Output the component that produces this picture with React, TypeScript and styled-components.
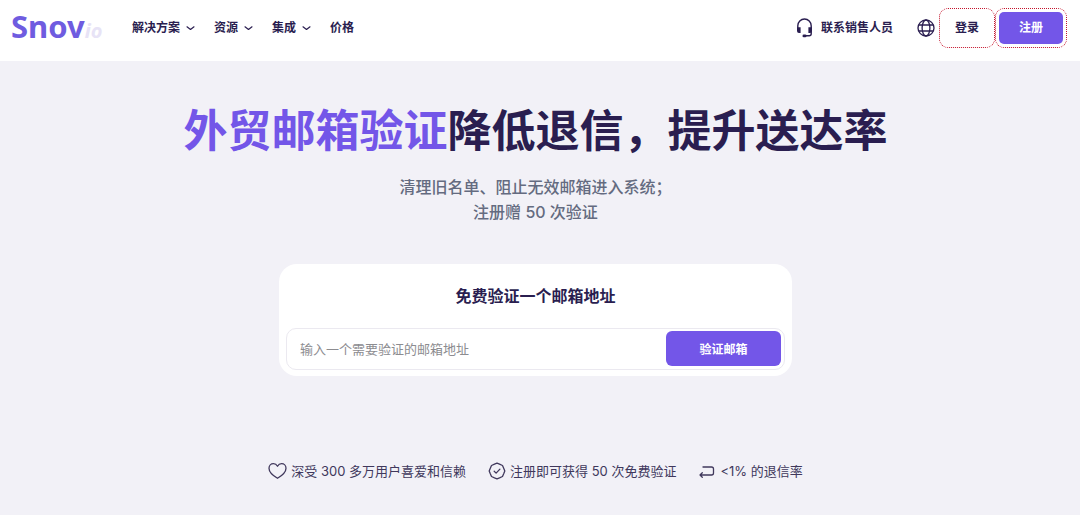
import React from 'react';
import styled, { createGlobalStyle } from 'styled-components';

const ink = '#2a1e50';
const violet = '#7356e8';

const GlobalStyle = createGlobalStyle`
  * { box-sizing: border-box; }
  body {
    margin: 0;
    background: #fff;
    color: ${ink};
    font-family: Inter, 'Noto Sans CJK SC', sans-serif;
  }
  button, input { font: inherit; }
  h1, h2, p, ul { margin: 0; padding: 0; }
`;

const Header = styled.header`
  display: flex;
  align-items: center;
  height: 61px;
  padding: 0 13px 5px 11px;
`;

const Logo = styled.a`
  display: flex;
  align-items: baseline;
  width: 121px;
  color: #6f5ce0;
  font: 700 31px/40px 'Noto Sans', sans-serif;
  text-decoration: none;
`;

const LogoSuffix = styled.span`
  color: #e7e3f6;
  font-size: 20px;
  font-style: italic;
`;

const Nav = styled.nav`
  display: flex;
  flex: 1;
  gap: 18px;
`;

const NavButton = styled.button`
  display: flex;
  align-items: center;
  gap: 5px;
  padding: 0;
  border: 0;
  background: none;
  color: ${ink};
  font-size: 12px;
  font-weight: 700;
  line-height: 20px;
  white-space: nowrap;
`;

const NavLink = styled.a`
  display: flex;
  align-items: center;
  gap: 8px;
  color: ${ink};
  font-size: 12px;
  font-weight: 700;
  line-height: 20px;
  text-decoration: none;
  white-space: nowrap;
`;

const Actions = styled.div`
  display: flex;
  align-items: center;
`;

const LanguageButton = styled.button`
  display: flex;
  margin: 0 4px 0 24px;
  padding: 0;
  border: 0;
  background: none;
  color: ${ink};
`;

const AccountFrame = styled.div`
  display: flex;
  padding: 3px;
  border: 1px dotted #c4142c;
  border-radius: 9px;
`;

const AccountLink = styled.a<{ $filled?: boolean }>`
  display: flex;
  align-items: center;
  justify-content: center;
  width: ${(p) => (p.$filled ? 64 : 48)}px;
  height: 32px;
  border-radius: 5px;
  background: ${(p) => (p.$filled ? violet : 'transparent')};
  color: ${(p) => (p.$filled ? '#fff' : ink)};
  font-size: 12px;
  font-weight: 700;
  line-height: 20px;
  text-decoration: none;
`;

const Hero = styled.main`
  display: flex;
  flex-direction: column;
  align-items: center;
  padding: 38px 9px 33px 0;
  background: #f2f1f7;
`;

const Title = styled.h1`
  font-size: 44px;
  font-weight: 700;
  line-height: 64px;
  text-align: center;
`;

const Accent = styled.span`
  color: ${violet};
`;

const Lead = styled.p`
  margin-top: 12px;
  color: #646b80;
  font-size: 16px;
  font-weight: 500;
  line-height: 25px;
  text-align: center;
`;

const Card = styled.form`
  width: 100%;
  max-width: 513px;
  margin-top: 39px;
  padding: 20px 7px 6px;
  border-radius: 18px;
  background: #fff;
`;

const CardTitle = styled.h2`
  font-size: 16px;
  font-weight: 700;
  line-height: 24px;
  text-align: center;
`;

const Field = styled.div`
  display: flex;
  align-items: center;
  height: 42px;
  margin-top: 20px;
  padding: 0 3px 1px 13px;
  border: 1px solid #ebe9f0;
  border-radius: 10px;
`;

const EmailInput = styled.input`
  flex: 1;
  min-width: 0;
  padding: 0;
  border: 0;
  outline: 0;
  background: none;
  color: ${ink};
  font-size: 13px;
  line-height: 20px;
  &::placeholder { color: #8c8c90; opacity: 1; }
`;

const SubmitButton = styled.button`
  width: 115px;
  height: 35px;
  border: 0;
  border-radius: 6px;
  background: ${violet};
  color: #fff;
  font-size: 12px;
  font-weight: 700;
`;

const Perks = styled.ul`
  display: flex;
  flex-wrap: wrap;
  justify-content: center;
  gap: 22px;
  margin-top: 84px;
  list-style: none;
`;

const Perk = styled.li`
  display: flex;
  align-items: center;
  gap: 4px;
  color: #40385c;
  font-size: 13px;
  line-height: 22px;
`;

const Chevron = () => (
  <svg width="11" height="8" viewBox="0 0 11 8" fill="none" stroke="currentColor" strokeWidth="1.2" strokeLinecap="round" strokeLinejoin="round" aria-hidden="true">
    <path d="M2 2.8 5.5 5.5 9 2.8" />
  </svg>
);

const Headset = () => (
  <svg width="17" height="20" viewBox="0 0 17 20" fill="none" stroke="currentColor" strokeWidth="1.4" aria-hidden="true">
    <path d="M1.8 10.5V7.7a6.7 6.7 0 0 1 13.4 0v8.1q0 2-2 2H9" />
    <path d="M1 9.3h3.6v5.8H3a2 2 0 0 1-2-2zM16 9.3h-3.6v5.8H14a2 2 0 0 0 2-2z" fill="currentColor" stroke="none" />
    <rect x="6.5" y="16.6" width="4" height="2.6" rx="1.3" fill="currentColor" stroke="none" />
  </svg>
);

const Globe = () => (
  <svg width="18" height="18" viewBox="0 0 18 18" fill="none" stroke="currentColor" strokeWidth="1.3" aria-hidden="true">
    <circle cx="9" cy="9" r="8" />
    <ellipse cx="9" cy="9" rx="3.9" ry="8" />
    <path d="M1.8 6h14.4M1.8 12h14.4" />
  </svg>
);

const Heart = () => (
  <svg width="19" height="18" viewBox="0 0 19 18" fill="none" stroke="currentColor" strokeWidth="1.3" strokeLinejoin="round" aria-hidden="true">
    <path d="M9.5 16.3C6.2 14.3 1 10.7 1 6.2 1 3.5 3 1.7 5.4 1.7c1.7 0 3.2.9 4.1 2.5.9-1.6 2.4-2.5 4.1-2.5C16 1.7 18 3.5 18 6.2c0 4.5-5.2 8.1-8.5 10.1z" />
  </svg>
);

const Badge = () => (
  <svg width="18" height="18" viewBox="0 0 18 18" fill="none" stroke="currentColor" strokeWidth="1.3" strokeLinecap="round" strokeLinejoin="round" aria-hidden="true">
    <path d="M9 1.2 11.5 2.2 14.5 3.5 15.8 6.5 16.8 9 15.8 11.5 14.5 14.5 11.5 15.8 9 16.8 6.5 15.8 3.5 14.5 2.2 11.5 1.2 9 2.2 6.5 3.5 3.5 6.5 2.2z" />
    <path d="m6.2 9.3 1.9 1.8 3.8-4" />
  </svg>
);

const ReturnArrow = () => (
  <svg width="18" height="16" viewBox="0 0 18 16" fill="none" stroke="currentColor" strokeWidth="1.3" strokeLinecap="round" strokeLinejoin="round" aria-hidden="true">
    <path d="M5 4h8.5q2 0 2 2v4q0 2-2 2H2M4.3 9.7 2 12l2.3 2.3" />
  </svg>
);

export default function App() {
  return (
    <>
      <GlobalStyle />
      <Header>
        <Logo href="#">Snov<LogoSuffix>io</LogoSuffix></Logo>
        <Nav>
          {['解决方案', '资源', '集成'].map((label) => (
            <NavButton type="button" key={label}>{label}<Chevron /></NavButton>
          ))}
          <NavLink href="#">价格</NavLink>
        </Nav>
        <Actions>
          <NavLink href="#"><Headset />联系销售人员</NavLink>
          <LanguageButton type="button" aria-label="语言"><Globe /></LanguageButton>
          <AccountFrame><AccountLink href="#">登录</AccountLink></AccountFrame>
          <AccountFrame><AccountLink href="#" $filled>注册</AccountLink></AccountFrame>
        </Actions>
      </Header>
      <Hero>
        <Title><Accent>外贸邮箱验证</Accent>降低退信，提升送达率</Title>
        <Lead>清理旧名单、阻止无效邮箱进入系统；<br />注册赠 50 次验证</Lead>
        <Card>
          <CardTitle><label htmlFor="email">免费验证一个邮箱地址</label></CardTitle>
          <Field>
            <EmailInput id="email" type="email" placeholder="输入一个需要验证的邮箱地址" />
            <SubmitButton type="button">验证邮箱</SubmitButton>
          </Field>
        </Card>
        <Perks>
          <Perk><Heart />深受 300 多万用户喜爱和信赖</Perk>
          <Perk><Badge />注册即可获得 50 次免费验证</Perk>
          <Perk><ReturnArrow />&lt;1% 的退信率</Perk>
        </Perks>
      </Hero>
    </>
  );
}
